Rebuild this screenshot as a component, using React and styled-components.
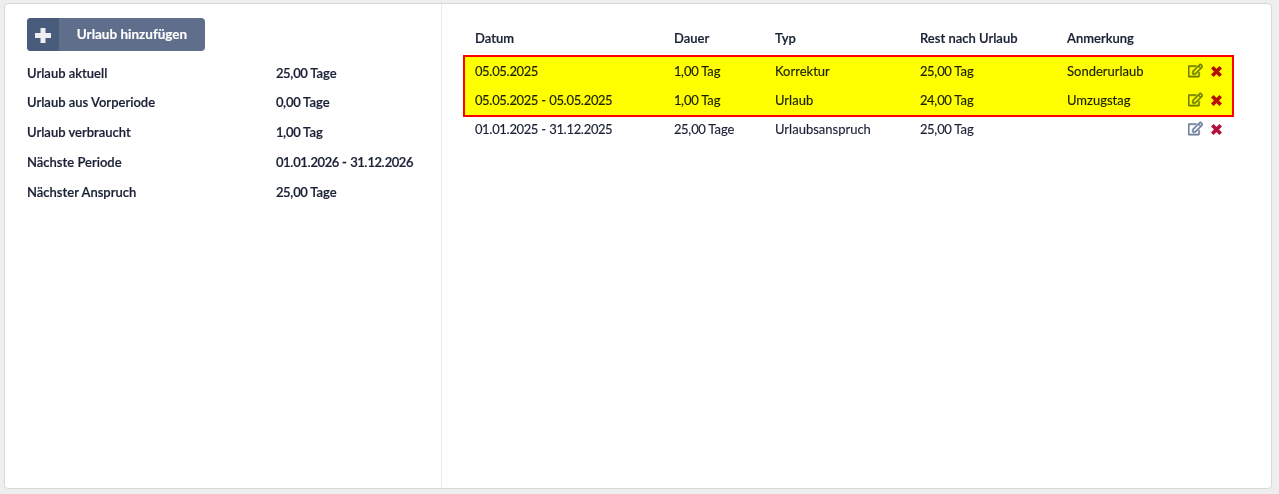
import React from 'react';
import styled, {createGlobalStyle} from "styled-components";
import {FaRegEdit} from "react-icons/fa";

const GlobalStyle = createGlobalStyle`
  html, body {
    margin: 0;
    padding: 0;
    height: 100%;
    background: #eeeeee;
    overflow: hidden;
  }
  body {
    font-family: Lato, "Open Sans", sans-serif;
    font-size: 13px;
    color: #1a2035;
    -webkit-text-stroke: 0.15px currentColor;
  }
`

const Page = styled.div`
  box-sizing: border-box;
  height: 494px;
  padding: 3px 7px 5px 4px;
  display: flex;
`

const Card = styled.div`
  flex: 1;
  display: flex;
  background: #fff;
  border: 1px solid #d8d8d8;
  border-radius: 4px;
`

const Sidebar = styled.aside`
  box-sizing: border-box;
  width: 437px;
  padding: 14px 0 0 22px;
  border-right: 1px solid #ebebeb;
`

const AddButton = styled.button`
  display: flex;
  width: 178px;
  height: 33px;
  padding: 0;
  border: none;
  border-radius: 4px;
  overflow: hidden;
  background: #5f6f8b;
  color: #fff;
  font: 700 13.5px Lato, sans-serif;
`

const AddIcon = styled.span`
  width: 32px;
  height: 100%;
  padding-top: 2px;
  box-sizing: border-box;
  display: flex;
  align-items: center;
  justify-content: center;
  background: #4a5c7c;
`

const AddLabel = styled.span`
  flex: 1;
  line-height: 33px;
  text-align: center;
`

const Stats = styled.dl`
  margin: 7.3px 0 0;
  display: grid;
  grid-template-columns: 249px 1fr;
  grid-template-rows: 29px repeat(4, 30px);
  align-items: center;
  font-weight: 600;
  -webkit-text-stroke: 0.2px currentColor;
`

const StatName = styled.dt``

const StatValue = styled.dd`
  margin: 0;
`

const Content = styled.main`
  flex: 1;
  padding: 19px 0 0 21px;
`

const TableWrap = styled.div`
  position: relative;
  width: 771px;
`

const Row = styled.div`
  display: grid;
  grid-template-columns: 199px 101px 145px 147px 121px 1fr;
  align-items: center;
  height: 29px;
  padding-left: 12px;
`

const HeadRow = styled(Row)`
  box-sizing: border-box;
  height: 33px;
  padding-bottom: 3px;
  font-weight: 600;
  -webkit-text-stroke: 0.2px currentColor;
`

const Digit = styled.span`
  letter-spacing: -0.46px;
`

const Actions = styled.div`
  display: flex;
  align-items: center;
  gap: 8px;
`

const EditIcon = styled(FaRegEdit)`
  color: #6f7f9e;
  font-size: 15px;
  stroke: currentColor;
  stroke-width: 22px;
`

const DeleteSvg = styled.svg`
  width: 11px;
  height: 11px;
  margin-top: 1px;
  color: #b5103c;
`

// gelber Rahmen liegt ueber den Zeilen
const Highlight = styled.div`
  position: absolute;
  left: 0;
  right: 0;
  top: 32px;
  height: 62px;
  box-sizing: border-box;
  background: #ffff00;
  border: 2px solid #ff0000;
  mix-blend-mode: multiply;
  pointer-events: none;
`

const PlusIcon = () => (
    <svg width="16" height="15" viewBox="0 0 16 15" fill="#eceef2">
        <path d="M5.5 0h5v5H16v5h-5.5v5h-5v-5H0V5h5.5z"/>
    </svg>
)

const DeleteIcon = () => (
    <DeleteSvg viewBox="0 0 11 11" stroke="currentColor" strokeWidth="3.7">
        <path d="M1.3 1.3l8.4 8.4M9.7 1.3L1.3 9.7"/>
    </DeleteSvg>
)

// Ziffern laufen im Original enger als der Rest
const Txt = ({children}) => children.split(/(\d+)/).map((part, i) => (
    i % 2 ? <Digit key={i}>{part}</Digit> : part
))

const STATS = [
    ['Urlaub aktuell', '25,00 Tage'],
    ['Urlaub aus Vorperiode', '0,00 Tage'],
    ['Urlaub verbraucht', '1,00 Tag'],
    ['Nächste Periode', '01.01.2026 - 31.12.2026'],
    ['Nächster Anspruch', '25,00 Tage'],
]

const ROWS = [
    ['05.05.2025', '1,00 Tag', 'Korrektur', '25,00 Tag', 'Sonderurlaub'],
    ['05.05.2025 - 05.05.2025', '1,00 Tag', 'Urlaub', '24,00 Tag', 'Umzugstag'],
    ['01.01.2025 - 31.12.2025', '25,00 Tage', 'Urlaubsanspruch', '25,00 Tag', ''],
]

const App = () => {
    return (
        <Page>
            <GlobalStyle/>
            <Card>
                <Sidebar>
                    <AddButton>
                        <AddIcon><PlusIcon/></AddIcon>
                        <AddLabel>Urlaub hinzufügen</AddLabel>
                    </AddButton>
                    <Stats>
                        {
                            STATS.map(([name, value]) => (
                                <React.Fragment key={name}>
                                    <StatName>{name}</StatName>
                                    <StatValue><Txt>{value}</Txt></StatValue>
                                </React.Fragment>
                            ))
                        }
                    </Stats>
                </Sidebar>
                <Content>
                    <TableWrap>
                        <HeadRow>
                            <span>Datum</span>
                            <span>Dauer</span>
                            <span>Typ</span>
                            <span>Rest nach Urlaub</span>
                            <span>Anmerkung</span>
                            <span/>
                        </HeadRow>
                        {
                            ROWS.map((r) => (
                                <Row key={r[0]}>
                                    {r.map((c, i) => <span key={i}><Txt>{c}</Txt></span>)}
                                    <Actions>
                                        <EditIcon/>
                                        <DeleteIcon/>
                                    </Actions>
                                </Row>
                            ))
                        }
                        <Highlight/>
                    </TableWrap>
                </Content>
            </Card>
        </Page>
    );
};

export default App;
